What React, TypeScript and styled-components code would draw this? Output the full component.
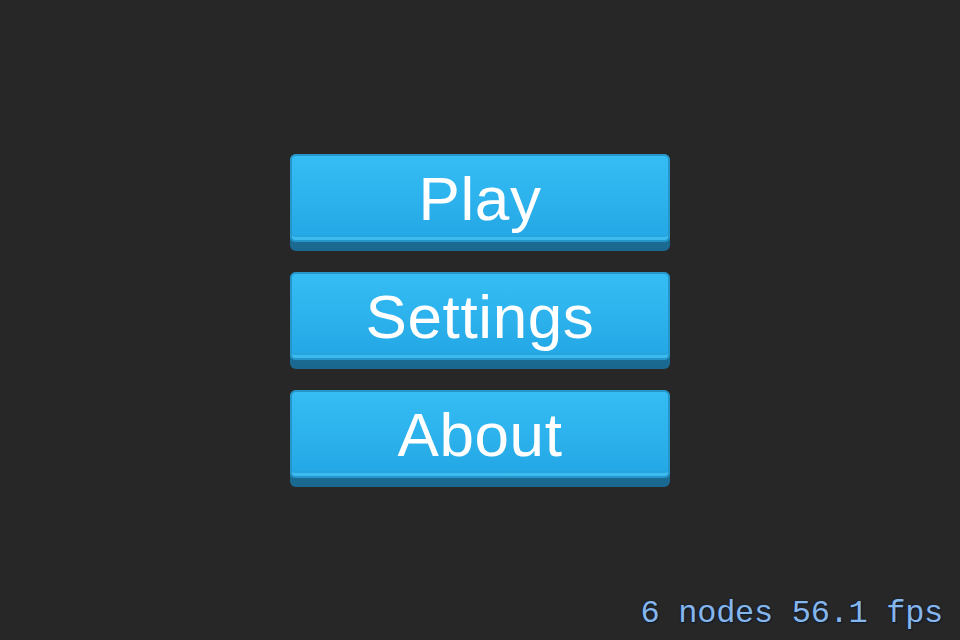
import React from "react";
import styled, { createGlobalStyle } from "styled-components";

const Global = createGlobalStyle`
  html, body { margin: 0; padding: 0; background: #272727; }
  body { width: 960px; height: 640px; overflow: hidden; }
`;

const Stage = styled.div`
  position: relative;
  width: 960px;
  height: 640px;
  background: #272727;
  display: flex;
  flex-direction: column;
  align-items: center;
  justify-content: center;
  gap: 21px;
`;

const Button = styled.div`
  width: 380px;
  height: 97px;
  box-sizing: border-box;
  border-radius: 6px;
  background: linear-gradient(#1f7dab, #1a6890);
  padding-bottom: 9px;
  display: flex;
  flex-direction: column;
`;

const Face = styled.div`
  flex: 1;
  box-sizing: border-box;
  border-radius: 6px 6px 5px 5px;
  border: 2px solid #2596ca;
  background: linear-gradient(#36bdf4, #23a7e5);
  box-shadow: inset 0 -3px 0 #3dbbef, inset 0 -5px 0 #26a4de;
  display: flex;
  align-items: center;
  justify-content: center;
  font-family: "Liberation Sans", Arial, sans-serif;
  font-size: 62px;
  letter-spacing: 0.6px;
  color: #ffffff;
  line-height: 1;
  padding-top: 2px;
`;

const Stats = styled.div`
  position: absolute;
  right: 17px;
  bottom: 8px;
  font-family: "Liberation Mono", "Courier New", monospace;
  font-size: 32px;
  letter-spacing: -0.3px;
  color: #86b6ec;
  text-shadow: 1px 1px 1px #0c1a2c, 0 0 2px #0c1a2c;
`;

const items = ["Play", "Settings", "About"];

export default function App() {
  return (
    <>
      <Global />
      <Stage>
        {items.map((t) => (
          <Button key={t}>
            <Face>{t}</Face>
          </Button>
        ))}
        <Stats>6 nodes 56.1 fps</Stats>
      </Stage>
    </>
  );
}
